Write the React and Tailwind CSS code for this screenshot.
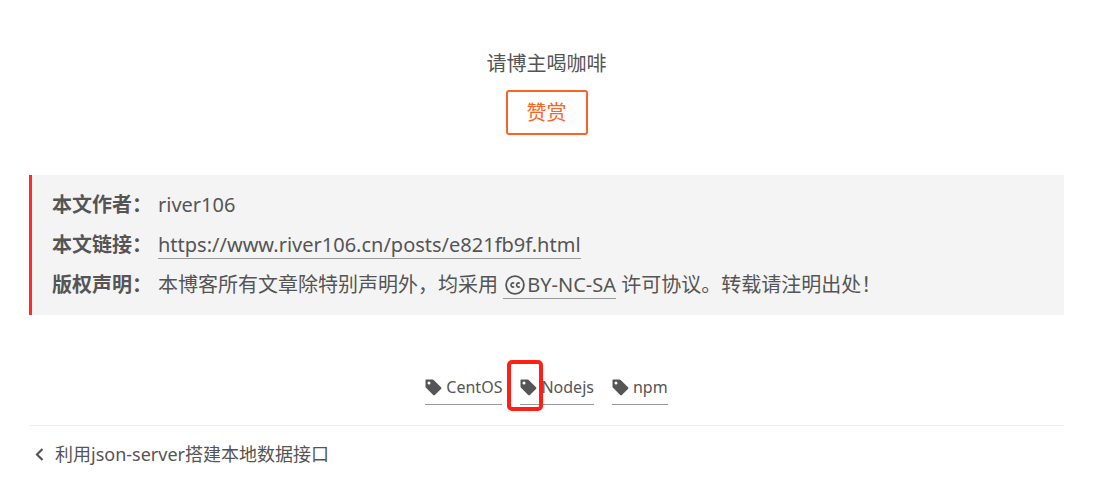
const tags = ["CentOS", "Nodejs", "npm"];

function TagIcon() {
  return (
    <svg viewBox="0 0 17 17" className="w-[17px] h-[17px] shrink-0" fill="currentColor" aria-hidden="true">
      <path
        fillRule="evenodd"
        d="M1.2 0.5h6.3c.5 0 .9.2 1.2.5l7.3 7.2c.5.5.5 1.2 0 1.700l-6.100 6.100c-.5.5-1.200.5-1.700 0L1 8.800c-.3-.3-.5-.7-.5-1.200V1.200c0-.4.300-.7.700-.7zM4 2.400a1.500 1.500 0 1 0 0 3 1.500 1.500 0 0 0 0-3z"
      />
    </svg>
  );
}

function CreativeCommonsIcon() {
  return (
    <svg viewBox="0 0 20 20" className="w-5 h-5 shrink-0" fill="none" stroke="currentColor" aria-hidden="true">
      <circle cx="10" cy="10" r="8.900" strokeWidth="1.800" />
      <path d="M9.200 8.400a2 2 0 1 0 0 3.200M14.800 8.400a2 2 0 1 0 0 3.200" strokeWidth="1.600" />
    </svg>
  );
}

function Reward() {
  return (
    <section className="flex flex-col items-center">
      <p className="text-xl leading-10">请博主喝咖啡</p>
      <button
        type="button"
        className="mt-[6px] h-[45px] px-[19px] border-2 border-[#fc6423] rounded-[3px] text-xl text-[#fc6423] cursor-pointer"
      >
        赞赏
      </button>
    </section>
  );
}

function Copyright() {
  return (
    <ul className="mt-10 py-[10px] px-5 bg-[#f4f4f4] border-l-3 border-[#ff2a2a] text-xl leading-10">
      <li className="flex gap-[6px]">
        <strong>本文作者：</strong>
        <span>river106</span>
      </li>
      <li className="flex gap-[6px]">
        <strong>本文链接：</strong>
        <span>
          <a href="https://www.river106.cn/posts/e821fb9f.html" className="border-b border-[#999]">
            https://www.river106.cn/posts/e821fb9f.html
          </a>
        </span>
      </li>
      <li className="flex gap-[6px]">
        <strong className="shrink-0">版权声明：</strong>
        <span>
          本博客所有文章除特别声明外，均采用{" "}
          <a href="#license" className="border-b border-[#999] whitespace-nowrap">
            <span className="inline-block align-[-3px] px-[2px]">
              <CreativeCommonsIcon />
            </span>
            BY-NC-SA
          </a>{" "}
          许可协议。转载请注明出处！
        </span>
      </li>
    </ul>
  );
}

function Tags() {
  return (
    <div className="mt-[55px] flex justify-center gap-[18px] text-base leading-[34px]">
      {tags.map((tag) => (
        <a key={tag} href={`#${tag}`} className="relative flex items-center gap-1 border-b border-[#999]">
          <TagIcon />
          {tag}
          {/* red marker drawn around one icon */}
          {tag === "Nodejs" && (
            <span className="absolute -left-[13px] -top-[10px] w-9 h-[51px] border-4 border-[#ff1f14] rounded-[5px]" />
          )}
        </a>
      ))}
    </div>
  );
}

function App() {
  return (
    <main className="pt-11 pl-[29px] pr-[29px] pb-3 bg-white text-[#555] font-['Noto_Sans','Noto_Sans_CJK_SC',sans-serif]">
      <Reward />
      <Copyright />
      <Tags />
      <nav className="mt-5 pt-[10px] border-t border-[#eee] text-lg leading-9">
        <a href="#prev" className="inline-flex items-center">
          <svg viewBox="0 0 20 20" className="w-5 h-5 mr-[6px]" fill="none" stroke="currentColor" strokeWidth="2.200" aria-hidden="true">
            <path d="M13.500 5L8 10.500l5.500 5.500" />
          </svg>
          利用json-server搭建本地数据接口
        </a>
      </nav>
    </main>
  );
}

export default App;
